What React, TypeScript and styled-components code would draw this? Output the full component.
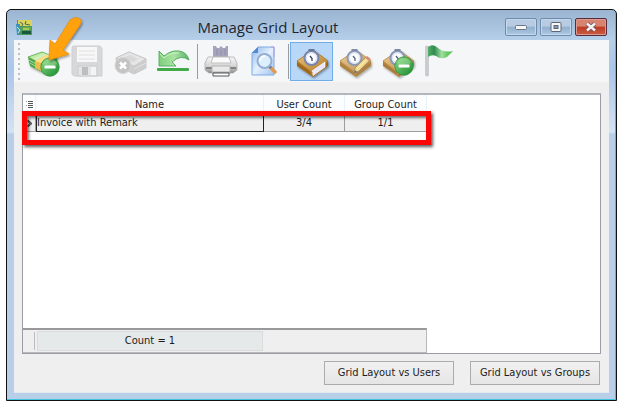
import React from "react";
import styled, { createGlobalStyle, css } from "styled-components";

const GlobalStyle = createGlobalStyle`
  * { box-sizing: border-box; }
  body {
    margin: 0;
    background: #fff;
    font-family: "DejaVu Sans Condensed", "Noto Sans", sans-serif;
    font-size: 11px;
    line-height: 16px;
    color: #1c1c1c;
  }
`;

const Desktop = styled.div`
  display: flex;
  min-height: 100vh;
  padding: 9px 5px 5px 6px;
`;

const Frame = styled.main`
  position: relative;
  flex: 1;
  display: flex;
  flex-direction: column;
  padding: 0 7px 7px;
  border: 1px solid #111;
  border-radius: 5px 5px 0 0;
  box-shadow: inset -1px -1px 0 #3fc3dc;
  background: linear-gradient(#9ab4d1 0, #b5cfea 30px, #aac6e8 60px, #d4e3f5 122px, #b8cfea 124px);
`;

const TitleBar = styled.header`
  display: grid;
  grid-template-columns: 17px 1fr 104px;
  align-items: center;
  height: 30px;
  padding: 4px 2px 0;
`;

const Title = styled.h1`
  margin: 0;
  text-align: center;
  font: 400 15px/22px "Open Sans", "Noto Sans", sans-serif;
  color: #1d2733;
`;

const WindowButtons = styled.div`
  display: flex;
  justify-content: flex-end;
  gap: 3px;
`;

const WindowButton = styled.button<{ $danger?: boolean }>`
  display: grid;
  place-items: center;
  width: 32px;
  height: 18px;
  padding: 0;
  border: 1px solid ${(p) => (p.$danger ? "#552d3f" : "#6f8bab")};
  border-radius: 2px;
  box-shadow: inset 0 0 0 1px ${(p) => (p.$danger ? "#dd9a8e" : "#c5d9ec")};
  background: ${(p) =>
    p.$danger
      ? "linear-gradient(#d8836f 0 45%, #bd3a25 50%, #c95e43)"
      : "linear-gradient(#b7cce2 0 45%, #91afcd 50%, #acc8e3)"};
`;

const Client = styled.div`
  flex: 1;
  display: flex;
  flex-direction: column;
  background: #efefef;
  border: solid #e4e8ec;
  border-width: 0 0 1px;
`;

const Toolbar = styled.div`
  display: flex;
  align-items: center;
  height: 42px;
  padding-left: 3px;
  background: #f4f6f8;
`;

const Grip = styled.div`
  width: 5px;
  height: 38px;
  background: radial-gradient(circle at 2px 2px, #bcbfc4 1px, transparent 1px) 0 0 / 5px 5px;
`;

const ToolButton = styled.button<{ $active?: boolean }>`
  width: 43px;
  height: 39px;
  padding: 0;
  border: 0;
  background: transparent;
  ${(p) =>
    p.$active &&
    css`
      background: #b9d8f8;
      box-shadow: inset 0 0 0 1px #6fadea;
    `}
  svg { display: block; }
`;

const Separator = styled.div`
  width: 5px;
  height: 35px;
  background: linear-gradient(#9b9b9b, #9b9b9b) 3px 0 / 1px 100% no-repeat;
`;

const Content = styled.div`
  flex: 1;
  display: flex;
  flex-direction: column;
  padding: 11px 8px 7px;
`;

const GridPanel = styled.section`
  position: relative;
  flex: 1;
  display: flex;
  flex-direction: column;
  justify-content: space-between;
  background: #fff;
  border: 1px solid #9a9ca6;
  border-top: 2px solid #b3b6bc;
`;

const Table = styled.table`
  width: 404px;
  max-width: 100%;
  table-layout: fixed;
  border-collapse: separate;
  border-spacing: 0;
  text-align: center;
`;

const Col = styled.col<{ $w?: number }>`
  width: ${(p) => (p.$w ? `${p.$w}px` : "auto")};
`;

const HeadCell = styled.th`
  height: 19px;
  padding: 0;
  font-weight: 400;
  background: #fcfdfe;
  border-right: 1px solid #e9f1f9;
  svg { display: block; margin-left: 3px; }
`;

const Cell = styled.td<{ $focused?: boolean }>`
  height: 18px;
  padding: 1px 0 0;
  background: #efefef;
  border: solid #9d9d9d;
  border-width: 0 1px 1px 0;
  ${(p) =>
    p.$focused &&
    css`
      padding: 0;
      text-align: left;
      border: 1px solid #222;
    `}
  svg { display: block; margin-left: 3px; }
`;

const Highlight = styled.div`
  position: absolute;
  top: 16px;
  left: -1px;
  width: 409px;
  height: 34px;
  border: 5px solid #fb0505;
  box-shadow: 2px 2px 3px rgba(0, 0, 0, 0.65), inset 2px 2px 3px rgba(0, 0, 0, 0.55);
  pointer-events: none;
`;

const Footer = styled.div`
  display: grid;
  grid-template-columns: 11px 229px 1fr;
  width: 404px;
  max-width: 100%;
  height: 25px;
  border: solid #b9b9bb;
  border-width: 2px 1px 1px 0;
  border-top-color: #99999c;
  background: #efefef;
`;

const FooterTotal = styled.output`
  grid-column: 2 / 3;
  padding: 1px 0 0;
  margin: 1px 0 1px 3px;
  border: 1px solid #dadcdc;
  background: #e5e9e9;
  box-shadow: -3px 0 0 -1px #efefef, -4px 0 0 -1px #bbb;
  text-align: center;
`;

const Actions = styled.div`
  display: flex;
  justify-content: flex-end;
  gap: 16px;
  padding: 7px 1px 0;
`;

const ActionButton = styled.button`
  width: 130px;
  height: 24px;
  padding: 0;
  border: 1px solid #acacac;
  background: linear-gradient(#f1f1f1, #e5e5e5);
  font: inherit;
  color: inherit;
`;

const Pointer = styled.svg`
  position: absolute;
  top: 4px;
  left: 36px;
  pointer-events: none;
`;

const SharedDefs = styled.svg`
  position: absolute;
  width: 0;
  height: 0;
`;

const Defs = () => (
  <SharedDefs aria-hidden="true">
    <defs>
      <linearGradient id="green" x1="0" y1="0" x2="1" y2="1">
        <stop offset="0" stopColor="#8fdc8b" /><stop offset="1" stopColor="#168a2b" />
      </linearGradient>
      <linearGradient id="note" x1="0" y1="0" x2="1" y2="1">
        <stop offset="0" stopColor="#8ed86f" /><stop offset=".4" stopColor="#d3f2bd" /><stop offset="1" stopColor="#4eb848" />
      </linearGradient>
      <linearGradient id="leather" x1="0" y1="0" x2="1" y2="1">
        <stop offset="0" stopColor="#edc884" /><stop offset="1" stopColor="#b27a28" />
      </linearGradient>
      <linearGradient id="silver" x1="0" y1="0" x2="0" y2="1">
        <stop offset="0" stopColor="#f8f8f8" /><stop offset=".6" stopColor="#d2d2d2" /><stop offset="1" stopColor="#8b8b8b" />
      </linearGradient>
      <linearGradient id="paper" x1="0" y1="0" x2="1" y2="1">
        <stop offset="0" stopColor="#8db9ea" /><stop offset=".5" stopColor="#e5f1fd" /><stop offset="1" stopColor="#9fc3ee" />
      </linearGradient>
      <linearGradient id="undo" x1="0" y1="0" x2="1" y2="0">
        <stop offset="0" stopColor="#7fce7c" /><stop offset=".5" stopColor="#a9e3a2" /><stop offset="1" stopColor="#59b36b" />
      </linearGradient>
      <linearGradient id="flag" x1="0" y1="0" x2="1" y2="0">
        <stop offset="0" stopColor="#58ad6b" /><stop offset=".25" stopColor="#2e8b4e" />
        <stop offset=".55" stopColor="#a2dfa0" /><stop offset=".75" stopColor="#6ccb68" /><stop offset="1" stopColor="#4bc04a" />
      </linearGradient>
      <filter id="soft" x="-20%" y="-20%" width="150%" height="150%">
        <feDropShadow dx="1" dy="1.5" stdDeviation="1" floodOpacity=".4" />
      </filter>
    </defs>
  </SharedDefs>
);

const Icon = ({ children }: { children: React.ReactNode }) => (
  <svg width="43" height="38" viewBox="0 0 43 38" aria-hidden="true">{children}</svg>
);

const MinusBadge = ({ x, y }: { x: number; y: number }) => (
  <g transform={`translate(${x} ${y})`}>
    <circle r="9.2" fill="url(#green)" stroke="#2e8f3a" strokeWidth=".8" />
    <path d="M-7 -3A7.5 7.5 0 0 1 7 -3Q0 1 -7 -3" fill="#d4f5cb" opacity=".3" />
    <rect x="-5.5" y="-1.5" width="11" height="3" rx=".5" fill="#fff" />
  </g>
);

const DeleteMoneyIcon = () => (
  <Icon>
    <g filter="url(#soft)">
      <path d="M6 15L20 10L35 16V24L22 31L8 24Z" fill="#48a546" />
      <path d="M6 15L20 10L35 16L22 23Z" fill="url(#note)" stroke="#5cae50" strokeWidth=".7" />
      <path d="M7 18L21 26M8 21L21 28.500" stroke="#c7efb4" strokeWidth=".8" />
      <path d="M13 19L26 12.500L31 14.500L19 21V29L13 26Z" fill="#edbd48" />
      <path d="M13 19L26 12.500L31 14.500L19 21Z" fill="#ffdf86" />
    </g>
    <MinusBadge x={28} y={25} />
  </Icon>
);

const SaveIcon = () => (
  <Icon>
    <path d="M8 4H35L37 6V34H9L7 32V5Z" fill="#d8d8da" stroke="#cecfd1" />
    <rect x="12" y="5" width="20" height="15" fill="#f7f7f8" />
    <path d="M14 9H30M14 13H30M14 17H30" stroke="#e0e0e3" />
    <rect x="13" y="24" width="19" height="10" fill="#e3e4e6" stroke="#cbccce" />
    <rect x="17" y="25" width="6" height="8" fill="#bdbec2" />
    <path d="M26 25H31V33H26Z" fill="#f4f4f5" />
  </Icon>
);

const CancelMoneyIcon = () => (
  <Icon>
    <path d="M8 16L21 10L38 17V26L26 32L9 24Z" fill="#cdcdce" stroke="#c8c8c9" />
    <path d="M8 16L21 10L38 17L26 24Z" fill="#e6e6e6" stroke="#cbcbcc" />
    <path d="M15 16L22 13L30 17L25 20Z" fill="#d8d8d9" />
    <path d="M26 27L38 21" stroke="#e4e4e4" />
    <circle cx="15" cy="23.500" r="8" fill="#c4c4c5" stroke="#d6d6d7" />
    <path d="M12 20.500L18 26.500M18 20.500L12 26.500" stroke="#fff" strokeWidth="2.500" />
  </Icon>
);

const UndoIcon = () => (
  <Icon>
    <path d="M8 9L13 14Q20 8 28 9Q36 10 38 18Q30 12 21 20L25 24H8Z" fill="url(#undo)" stroke="#4fa95c" strokeWidth=".9" />
    <path d="M9 12L13 16Q20 10 28 11" fill="none" stroke="#cdf2c5" />
    <rect x="6" y="26" width="32" height="3" rx="1" fill="#43aa49" />
  </Icon>
);

const PrintIcon = () => (
  <Icon>
    <path d="M14 16V4H17L18 6H20L22 4L24 6H26L27 4H29V16Z" fill="#a5a4bd" />
    <path d="M18 7V13M22 8V13M26 7V13" stroke="#8f8eaa" />
    <path d="M9 15H35L38 21V28L34 31H10L6 28V21Z" fill="url(#silver)" stroke="#a4a4a4" strokeWidth=".7" />
    <path d="M14 15H30L32 21H12Z" fill="#fbfbfb" stroke="#c1c1c1" />
    <path d="M7 26H13M31 26H37" stroke="#828282" strokeWidth="2" />
    <path d="M13 24H31V30H13Z" fill="#e9e9e9" stroke="#b4b4b4" />
    <path d="M14 31H30V34H14Z" fill="#fff" stroke="#555" />
  </Icon>
);

const PreviewIcon = () => (
  <Icon>
    <path d="M16 5H32V33H10V11Z" fill="url(#paper)" stroke="#7faae6" />
    <path d="M16 5V11H10Z" fill="#538bd2" />
    <path d="M29 5H32V15" fill="none" stroke="#b49be6" />
    <path d="M28 25L33 30" stroke="#e09a50" strokeWidth="3.500" strokeLinecap="round" />
    <path d="M27 24L29 26" stroke="#687995" strokeWidth="3" />
    <circle cx="22.500" cy="19" r="7" fill="#dceffd" stroke="#95aed2" strokeWidth="2" />
    <path d="M18 19A5 5 0 0 1 23 14" fill="none" stroke="#fff" strokeWidth="2" />
  </Icon>
);

const BookBase = ({ pages = true }: { pages?: boolean }) => (
  <>
    <g filter="url(#soft)">
      <path d="M7 19L23 8L38 19V24L23 35L7 24Z" fill="#9e691f" />
      <path d="M7 19L23 8L38 19L22 30Z" fill="url(#leather)" stroke="#b47d30" strokeWidth=".8" />
      {pages && <path d="M22 29L35 20V25L23 33.500Z" fill="#e7e6ff" stroke="#fff" strokeWidth=".7" />}
      <path d="M8 20L22 30V33" fill="none" stroke="#c48a38" />
    </g>
    <circle cx="21.500" cy="16" r="7" fill="#eef3fd" stroke="#7885a9" strokeWidth="2" />
    <circle cx="21.500" cy="16" r="5" fill="#fff" stroke="#cad6ec" strokeWidth=".7" />
    <path d="M20 14L22 16.500V19" fill="none" stroke="#334363" strokeWidth="1.300" />
    <path d="M18.500 8H24.500" stroke="#687697" strokeWidth="2" />
  </>
);

const BookIcon = () => <Icon><BookBase /></Icon>;

const EditBookIcon = () => (
  <Icon>
    <g opacity=".82">
      <BookBase pages={false} />
      <path d="M21 31L22 26L33 15L37 18L26 29Z" fill="#f5d275" stroke="#86764e" strokeWidth=".8" />
      <path d="M24 27L34 17" stroke="#fff0b0" />
      <path d="M32 16L34 14L38 17L36 19Z" fill="#d4785c" />
      <path d="M21 31L22 28L24 30Z" fill="#494c54" />
    </g>
  </Icon>
);

const DeleteBookIcon = () => (
  <Icon>
    <g opacity=".85"><BookBase pages={false} /></g>
    <MinusBadge x={28} y={24} />
  </Icon>
);

const FlagIcon = () => (
  <Icon>
    <rect x="6.500" y="4" width="3" height="30" rx="1" fill="#c9cccf" stroke="#b4b7ba" strokeWidth=".5" />
    <path d="M9 5Q14 1 19 6Q25 11 34 9L28 15Q22 18 17 14Q13 12 9 15Z" fill="url(#flag)" />
  </Icon>
);

const AppIcon = () => (
  <svg width="17" height="17" viewBox="0 0 17 17" aria-hidden="true">
    <rect x="1" y="1" width="15" height="15" fill="#4c9a5c" />
    <path d="M2 1H16V7H2Z" fill="#dcd45a" />
    <path d="M0 5H4V16H1Z" fill="#3b92ba" />
    <path d="M4 3L7 5L6 7M10 2L9 5L14 6" fill="none" stroke="#4d6b5c" strokeWidth="1" />
    <path d="M1 8L4 11L2 14" fill="none" stroke="#c9edf1" />
    <path d="M6 8H15V11H6Z" fill="#65a94d" />
    <path d="M6 12H15V15H6Z" fill="#1c5a40" />
    <path d="M7 10H13" stroke="#eee76d" />
  </svg>
);

const tools = [
  [
    { name: "Delete layout", icon: <DeleteMoneyIcon /> },
    { name: "Save", icon: <SaveIcon /> },
    { name: "Cancel", icon: <CancelMoneyIcon /> },
    { name: "Undo", icon: <UndoIcon /> },
  ],
  [
    { name: "Print", icon: <PrintIcon /> },
    { name: "Preview", icon: <PreviewIcon /> },
  ],
  [
    { name: "Browse", icon: <BookIcon />, active: true },
    { name: "Edit", icon: <EditBookIcon /> },
    { name: "Remove", icon: <DeleteBookIcon /> },
    { name: "Flag", icon: <FlagIcon /> },
  ],
];

const rows = [{ name: "Invoice with Remark", users: "3/4", groups: "1/1" }];

export default function App() {
  return (
    <>
      <GlobalStyle />
      <Defs />
      <Desktop>
        <Frame>
          <TitleBar>
            <AppIcon />
            <Title>Manage Grid Layout</Title>
            <WindowButtons>
              <WindowButton aria-label="Minimize">
                <svg width="12" height="6"><rect x=".5" y="1.500" width="11" height="4" rx="1" fill="#f6f6f6" stroke="#697583" /></svg>
              </WindowButton>
              <WindowButton aria-label="Maximize">
                <svg width="12" height="10">
                  <rect x="1" y=".5" width="10" height="9" rx="1" fill="#f6f6f6" stroke="#5d6876" />
                  <rect x="4" y="3.500" width="4" height="3" fill="#7e9cbd" stroke="#5d6876" />
                </svg>
              </WindowButton>
              <WindowButton $danger aria-label="Close">
                <svg width="12" height="10">
                  <path d="M2 1.500L10 8.500M10 1.500L2 8.500" stroke="#6b4f58" strokeWidth="4" />
                  <path d="M2 1.500L10 8.500M10 1.500L2 8.500" stroke="#f4f2f2" strokeWidth="2.500" />
                </svg>
              </WindowButton>
            </WindowButtons>
          </TitleBar>
          <Client>
            <Toolbar role="toolbar">
              <Grip />
              {tools.map((group, i) => (
                <React.Fragment key={i}>
                  {i > 0 && <Separator />}
                  {group.map((t) => (
                    <ToolButton key={t.name} aria-label={t.name} $active={"active" in t}>
                      {t.icon}
                    </ToolButton>
                  ))}
                </React.Fragment>
              ))}
            </Toolbar>
            <Content>
              <GridPanel>
                <Table>
                  <colgroup><Col $w={13} /><Col /><Col $w={81} /><Col $w={82} /></colgroup>
                  <thead>
                    <tr>
                      <HeadCell aria-label="Columns">
                        <svg width="8" height="9">
                          <path d="M2 1.500H7M2 3.500H7M2 5.500H7M2 7.500H7" stroke="#555" />
                          <path d="M0 1.500H1M0 5.500H1" stroke="#999" />
                        </svg>
                      </HeadCell>
                      <HeadCell>Name</HeadCell>
                      <HeadCell>User Count</HeadCell>
                      <HeadCell>Group Count</HeadCell>
                    </tr>
                  </thead>
                  <tbody>
                    {rows.map((r) => (
                      <tr key={r.name}>
                        <Cell>
                          <svg width="8" height="9"><path d="M2 1L6 4.500L2 8V6L4 4.500L2 3Z" fill="#777" stroke="#333" strokeWidth=".8" /></svg>
                        </Cell>
                        <Cell $focused>{r.name}</Cell>
                        <Cell>{r.users}</Cell>
                        <Cell>{r.groups}</Cell>
                      </tr>
                    ))}
                  </tbody>
                </Table>
                <Footer><FooterTotal>Count = {rows.length}</FooterTotal></Footer>
                <Highlight />
              </GridPanel>
              <Actions>
                <ActionButton>Grid Layout vs Users</ActionButton>
                <ActionButton>Grid Layout vs Groups</ActionButton>
              </Actions>
            </Content>
          </Client>
          <Pointer width="44" height="52" viewBox="0 0 44 52" aria-hidden="true">
            <path d="M6 46L7 26L12 30Q17 22 27 6Q34 1 38 6Q39 8 37 11L20 36L26 40Z" fill="#ffa20b" stroke="#e58b08" strokeWidth=".7" filter="url(#soft)" />
          </Pointer>
        </Frame>
      </Desktop>
    </>
  );
}
